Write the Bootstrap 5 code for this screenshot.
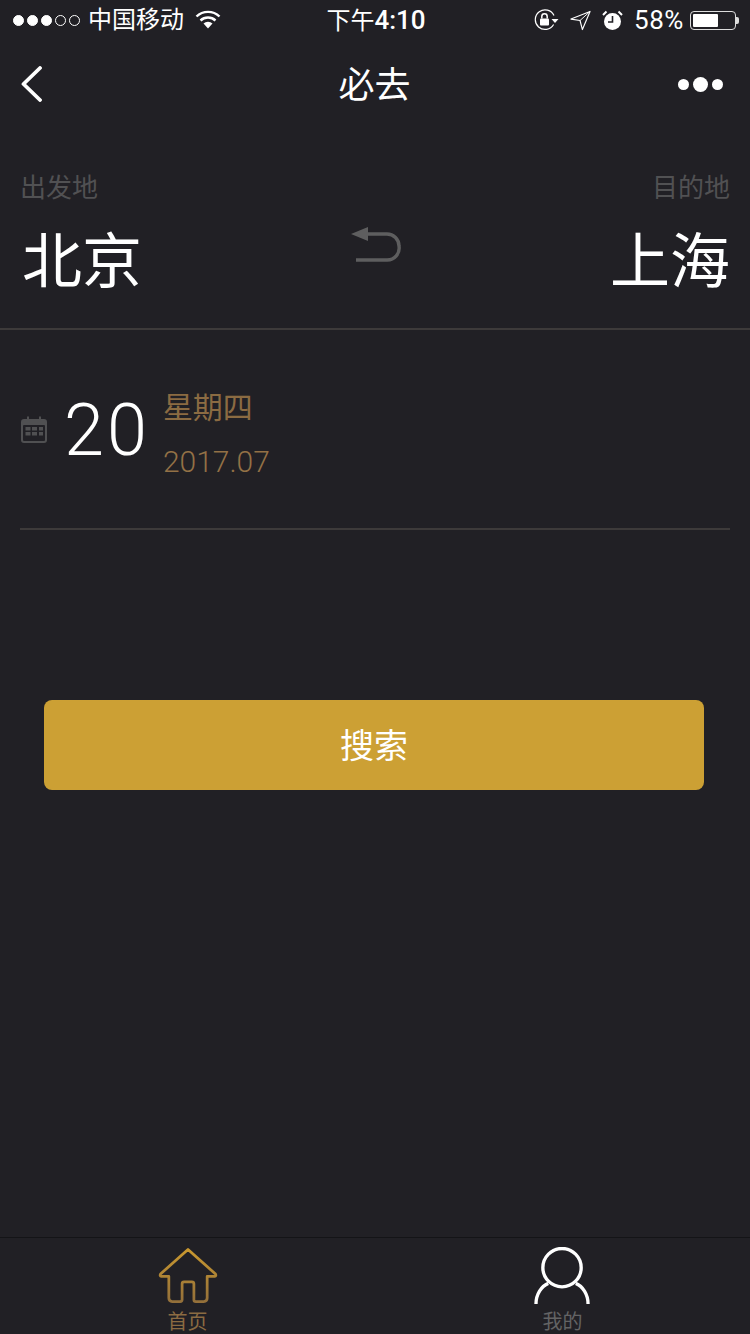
<!DOCTYPE html>
<html lang="zh">
<head>
<meta charset="utf-8">
<title>必去</title>
<link href="https://cdn.jsdelivr.net/npm/bootstrap@5.3.0/dist/css/bootstrap.min.css" rel="stylesheet">
<style>
html,body{height:100%;}
body{background:#212025;color:#fff;font-family:"Roboto","Noto Sans CJK SC",sans-serif;width:750px;height:1334px;overflow:hidden;}
.shell{height:1334px;}
.stat{height:40px;padding:0 11px 0 13px;font-size:24px;line-height:40px;}
.sigs{gap:3px;}
.sig{width:11px;height:11px;border-radius:50%;background:#fff;border:1px solid #fff;}
.sig-off{background:transparent;}
.carrier{margin-left:8px;margin-right:11px;font-size:24px;}
.clock{font-size:24px;font-weight:400;width:112px;}
.clock-num{font-size:26px;font-weight:500;}
.left-st,.right-st{flex:1 1 0;}
.st-gap{margin-left:11px;}
.pct{font-size:26px;letter-spacing:.6px;margin-left:11px;margin-right:6px;}
.batt{width:46px;height:19px;border:1px solid #ddd;border-radius:4px;padding:2px;}
.batt-fill{background:#fff;height:100%;border-radius:1px;}
.batt-tip{width:3px;height:7px;background:#ddd;border-radius:0 2px 2px 0;}
.topnav{height:88px;padding:0 22px 0 21px;}
.topnav-side{width:100px;}
.dots{padding-right:5px;}
.topnav-title{font-size:36px;font-weight:400;line-height:1;padding-top:3px;}
.dot-s{width:11px;height:11px;border-radius:50%;background:#fff;}
.dot-l{width:15px;height:15px;border-radius:50%;background:#fff;}
.route{height:202px;border-bottom:2px solid #3d3a3a;padding:44px 20px 0 20px;}
.lbl{font-size:26px;line-height:32px;color:#515153;}
.city{font-size:60px;line-height:70px;margin-top:24px;}
.city-l{margin-left:2px;}
.swap{margin-top:55px;}
.date-row{height:200px;margin:0 20px;border-bottom:2px solid #3d3a3a;padding-top:51px;}
.cal{margin-top:35px;}
.daynum{font-size:72px;line-height:100px;margin-left:16px;font-weight:300;letter-spacing:3px;}
.date-txt{margin-left:13px;}
.dow{font-size:30px;line-height:54px;color:#8b6b42;}
.ym{font-size:30px;line-height:54px;color:#937146;font-weight:300;}
.go{display:block;width:660px;height:90px;margin:170px 0 0 44px;background:#cca034;border:0;border-radius:8px;color:#fff;font-size:34px;line-height:92px;padding:0;}
.go:hover,.go:active{background:#cca034!important;color:#fff!important;}
.tabbar{height:97px;border-top:1px solid #141417;}
.tab{flex:1 1 0;font-size:20px;line-height:24px;padding-top:9px;}
.tab svg{display:block;}
.tab-on{color:#8b6b42;}
.tab-off{color:#636364;}
.tab-lbl{margin-top:6px;}
</style>
</head>
<body>
<div class="shell d-flex flex-column">
  <div class="stat d-flex align-items-center">
    <div class="left-st d-flex align-items-center">
      <div class="sigs d-flex"><span class="sig"></span><span class="sig"></span><span class="sig"></span><span class="sig sig-off"></span><span class="sig sig-off"></span></div>
      <span class="carrier">中国移动</span>
      <svg width="26" height="20" viewBox="0 0 26 20"><path d="M1.500 6.500a16.500 16.500 0 0 1 23 0M5.500 10.500a11 11 0 0 1 15 0" fill="none" stroke="#fff" stroke-width="2.400"/><path d="M8.500 13.500a6.500 6.500 0 0 1 9 0L13 18.500z" fill="#fff"/></svg>
    </div>
    <div class="clock text-center text-nowrap">下午<span class="clock-num">4:10</span></div>
    <div class="right-st d-flex align-items-center justify-content-end">
      <svg width="25" height="22" viewBox="0 0 25 22"><path d="M19.600 15.500A9.800 9.800 0 1 1 20 6.500" fill="none" stroke="#fff" stroke-width="1.200"/><rect x="6" y="9.500" width="9" height="7" rx="1" fill="#fff"/><path d="M7.800 9.500V7.500a2.700 2.700 0 0 1 5.400 0v2" fill="none" stroke="#fff" stroke-width="1.500"/><path d="M17.500 10h7l-3.500 4z" fill="#fff"/></svg>
      <svg class="st-gap" width="21" height="21" viewBox="0 0 22 21"><path d="M21 1 1 9l9.500 1.500L13 20z" fill="none" stroke="#fff" stroke-width="1.200" stroke-linejoin="round"/><path d="M21 1 10.500 10.500" stroke="#fff" stroke-width="1"/></svg>
      <svg class="st-gap" width="21" height="21" viewBox="0 0 21 21"><circle cx="10.500" cy="11.500" r="8.500" fill="#fff"/><path d="M10.500 6v6H6" fill="none" stroke="#212025" stroke-width="1.600"/><path d="M1 5 4.500 1.500M20 5 16.500 1.500" stroke="#fff" stroke-width="2"/></svg>
      <span class="pct">58%</span>
      <div class="batt d-flex"><div class="batt-fill" style="width:62%"></div></div>
      <div class="batt-tip"></div>
    </div>
  </div>

  <div class="topnav d-flex align-items-center">
    <div class="topnav-side">
      <svg class="d-block" width="21" height="36" viewBox="0 0 21 36"><path d="M19 2 2.500 18 19 34" fill="none" stroke="#fff" stroke-width="3.800" stroke-linecap="round" stroke-linejoin="round"/></svg>
    </div>
    <div class="topnav-title flex-grow-1 text-center">必去</div>
    <div class="topnav-side dots d-flex justify-content-end align-items-center gap-1">
      <span class="dot-s"></span><span class="dot-l"></span><span class="dot-s"></span>
    </div>
  </div>

  <div class="route d-flex justify-content-between">
    <div>
      <div class="lbl">出发地</div>
      <div class="city city-l">北京</div>
    </div>
    <svg class="swap" width="52" height="38" viewBox="0 0 52 38"><path d="M1 7 18 0v14z" fill="#5e5e5f"/><path d="M16 7h21a12 12 0 0 1 12 12v0a12 12 0 0 1-12 14H6" fill="none" stroke="#5e5e5f" stroke-width="3.400"/></svg>
    <div class="text-end">
      <div class="lbl">目的地</div>
      <div class="city">上海</div>
    </div>
  </div>

  <div class="date-row d-flex align-items-start">
    <svg class="cal" width="28" height="28" viewBox="0 0 28 28"><path d="M4 3h3V0.500h2V3h10V0.500h2V3h3a3 3 0 0 1 3 3v18a3 3 0 0 1-3 3H4a3 3 0 0 1-3-3V6a3 3 0 0 1 3-3z" fill="#505052"/><rect x="3" y="9" width="22" height="16" rx="1" fill="#212025"/><g fill="#505052"><rect x="5.500" y="11" width="5" height="3.500"/><rect x="12" y="11" width="5" height="3.500"/><rect x="19" y="11" width="4" height="3.500"/><rect x="5.500" y="16" width="5" height="3.500"/><rect x="12" y="16" width="5" height="3.500"/><rect x="19" y="16" width="4" height="3.500"/></g></svg>
    <div class="daynum">20</div>
    <div class="date-txt">
      <div class="dow">星期四</div>
      <div class="ym">2017.07</div>
    </div>
  </div>

  <button type="button" class="btn go">搜索</button>

  <div class="flex-grow-1"></div>

  <div class="tabbar d-flex">
    <div class="tab tab-on d-flex flex-column align-items-center">
      <svg width="62" height="58" viewBox="0 0 62 58"><defs><linearGradient id="hg" x1="0" y1="0" x2="0" y2="1"><stop offset="0" stop-color="#c9982f"/><stop offset="1" stop-color="#94703a"/></linearGradient></defs><path d="M31 2.500 3 27.500q-1 2 1 2.500h7.500v22q0 3.500 3.500 3.500h8q2 0 2-2V37.500q0-2 2-2h8q2 0 2 2V54q0 1.500 2 1.500h8q3.500 0 3.500-3.500V30H58q2-.5 1-2.500z" fill="none" stroke="url(#hg)" stroke-width="2.800" stroke-linejoin="round"/></svg>
      <div class="tab-lbl">首页</div>
    </div>
    <div class="tab tab-off d-flex flex-column align-items-center">
      <svg width="58" height="58" viewBox="0 0 58 58"><circle cx="28" cy="21" r="19.500" fill="none" stroke="#fff" stroke-width="3.400"/><path d="M1.500 58C1.500 48 7 40 14 37M54.500 58c0-10-5.500-18-12.500-21" fill="none" stroke="#fff" stroke-width="3.400"/></svg>
      <div class="tab-lbl">我的</div>
    </div>
  </div>
</div>
</body>
</html>
